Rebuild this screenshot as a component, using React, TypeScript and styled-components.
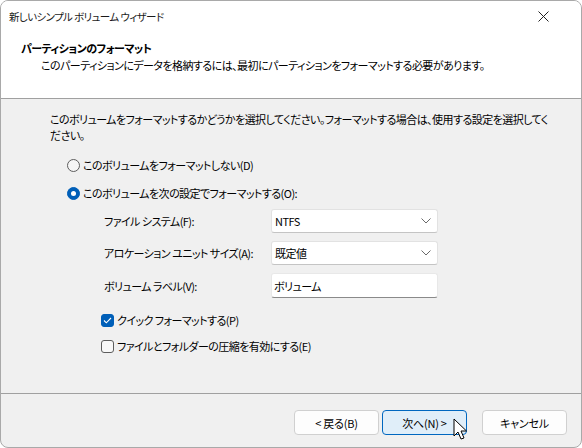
import styled, { createGlobalStyle } from "styled-components";

const Global = createGlobalStyle`
  html, body {
    margin: 0;
    padding: 0;
    background: #ffffff;
  }
  body {
    font-family: "Noto Sans CJK JP", "Noto Sans", sans-serif;
    font-size: 11px;
    letter-spacing: -0.55px;
    color: #000;
    font-feature-settings: "palt";
  }
`;

const Window = styled.div`
  position: relative;
  width: 582px;
  height: 448px;
  box-sizing: border-box;
  border: 1px solid #a9a9a9;
  border-radius: 8px;
  overflow: hidden;
  display: flex;
  flex-direction: column;
  background: #f0f0f0;
`;

const TitleBar = styled.div`
  height: 31px;
  background: #fff;
  display: flex;
  align-items: center;
  justify-content: space-between;
  padding-left: 8px;
  padding-right: 32px;
  line-height: 16px;
  font-size: 10.5px;
  letter-spacing: -0.6px;
  color: #1a1a1a;
`;

const Header = styled.div`
  background: #fff;
  height: 67px;
  box-sizing: border-box;
  border-bottom: 1px solid #a0a0a0;
  padding: 8px 0 0 20px;
  line-height: 17px;
`;

const HeaderTitle = styled.div`
  font-weight: bold;
`;

const HeaderSub = styled.div`
  padding-left: 20px;
`;

const Body = styled.div`
  flex: 1;
  padding: 12px 20px 0 49px;
  line-height: 16px;
  white-space: nowrap;
`;

const Intro = styled.p`
  margin: 0;
`;

const Choice = styled.label`
  display: flex;
  align-items: center;
  gap: 3px;
  height: 20px;
  margin-left: ${(p: { indent: number }) => p.indent}px;
`;

const Radio = styled.span<{ checked?: boolean }>`
  width: 13px;
  height: 13px;
  box-sizing: border-box;
  border-radius: 50%;
  flex: none;
  background: ${(p) => (p.checked ? "#005fb8" : "#f6f6f6")};
  border: 1px solid ${(p) => (p.checked ? "#005fb8" : "#5d5d5d")};
  display: flex;
  align-items: center;
  justify-content: center;
  &::after {
    content: "";
    display: ${(p) => (p.checked ? "block" : "none")};
    width: 5px;
    height: 5px;
    border-radius: 50%;
    background: #fff;
  }
`;

const Check = styled.span<{ checked?: boolean }>`
  width: 13px;
  height: 13px;
  box-sizing: border-box;
  border-radius: 3px;
  flex: none;
  background: ${(p) => (p.checked ? "#005fb8" : "#f8f8f8")};
  border: 1px solid ${(p) => (p.checked ? "#005fb8" : "#5d5d5d")};
  display: flex;
  align-items: center;
  justify-content: center;
`;

const Settings = styled.div`
  display: grid;
  grid-template-columns: 167px 167px;
  row-gap: 8px;
  align-items: center;
  margin: 6px 0 12px 54px;
`;

const FieldLabel = styled.span``;

const Select = styled.div`
  height: 24px;
  box-sizing: border-box;
  background: #fff;
  border: 1px solid #e2e2e2;
  border-bottom-color: #c4c4c4;
  border-radius: 3px;
  display: flex;
  align-items: center;
  justify-content: space-between;
  padding: 0 6px 0 3px;
`;

const TextBox = styled.div`
  height: 25px;
  box-sizing: border-box;
  background: #fff;
  border: 1px solid #e8e8e8;
  border-bottom: 1px solid #8a8a8a;
  border-radius: 3px;
  display: flex;
  align-items: center;
  padding: 0 2px;
`;

const Gap = styled.div<{ h: number }>`
  height: ${(p) => p.h}px;
`;

const Footer = styled.div`
  height: 54px;
  box-sizing: border-box;
  border-top: 1px solid #a0a0a0;
  display: flex;
  justify-content: flex-end;
  align-items: flex-start;
  padding: 16px 14px 0 0;
`;

const Button = styled.button<{ primary?: boolean }>`
  width: 85px;
  height: 25px;
  box-sizing: border-box;
  border-radius: 4px;
  font: inherit;
  letter-spacing: -0.2px;
  white-space: pre;
  line-height: 16px;
  color: #000;
  background: ${(p) => (p.primary ? "#e0eef9" : "#fdfdfd")};
  border: 1px solid ${(p) => (p.primary ? "#0067c0" : "#d0d0d0")};
  margin-left: ${(p) => (p.primary ? "3px" : "0")};
  padding: 0;
`;

const CancelButton = styled(Button)`
  margin-left: 15px;
`;

const Cursor = styled.svg`
  position: absolute;
  left: 452px;
  top: 417px;
`;

const Chevron = () => (
  <svg width="10" height="6" viewBox="0 0 10 6">
    <polyline points="0.5,0.5 5,5 9.5,0.5" fill="none" stroke="#6a6a6a" strokeWidth="1" />
  </svg>
);

export default function App() {
  return (
    <>
      <Global />
      <Window>
        <TitleBar>
          <span>新しいシンプル ボリューム ウィザード</span>
          <svg width="11" height="11" viewBox="0 0 11 11">
            <path d="M0.5 0.5 L10.5 10.5 M10.5 0.5 L0.5 10.5" stroke="#222" strokeWidth="1" />
          </svg>
        </TitleBar>
        <Header>
          <HeaderTitle>パーティションのフォーマット</HeaderTitle>
          <HeaderSub>このパーティションにデータを格納するには、最初にパーティションをフォーマットする必要があります。</HeaderSub>
        </Header>
        <Body>
          <Intro>
            このボリュームをフォーマットするかどうかを選択してください。フォーマットする場合は、使用する設定を選択してく
            <br />
            ださい。
          </Intro>
          <Gap h={12} />
          <Choice indent={17}>
            <Radio />
            このボリュームをフォーマットしない(D)
          </Choice>
          <Gap h={8} />
          <Choice indent={17}>
            <Radio checked />
            このボリュームを次の設定でフォーマットする(O):
          </Choice>
          <Settings>
            <FieldLabel>ファイル システム(F):</FieldLabel>
            <Select>
              NTFS
              <Chevron />
            </Select>
            <FieldLabel>アロケーション ユニット サイズ(A):</FieldLabel>
            <Select>
              既定値
              <Chevron />
            </Select>
            <FieldLabel>ボリューム ラベル(V):</FieldLabel>
            <TextBox>ボリューム</TextBox>
          </Settings>
          <Choice indent={51}>
            <Check checked>
              <svg width="9" height="7" viewBox="0 0 9 7">
                <polyline points="1,3.5 3.3,5.8 8,1" fill="none" stroke="#fff" strokeWidth="1.1" />
              </svg>
            </Check>
            クイック フォーマットする(P)
          </Choice>
          <Gap h={6} />
          <Choice indent={51}>
            <Check />
            ファイルとフォルダーの圧縮を有効にする(E)
          </Choice>
        </Body>
        <Footer>
          <Button>{"<\u2009戻る(B)"}</Button>
          <Button primary>{"次へ(N)\u2009>"}</Button>
          <CancelButton>キャンセル</CancelButton>
        </Footer>
        <Cursor width="16" height="24" viewBox="0 0 16 24">
          <path
            d="M1 1 L1 18 L5 14 L8 21 L11 20 L8 13 L13.5 13 Z"
            fill="#fff"
            stroke="#000"
            strokeWidth="1"
            strokeLinejoin="round"
          />
        </Cursor>
      </Window>
    </>
  );
}
